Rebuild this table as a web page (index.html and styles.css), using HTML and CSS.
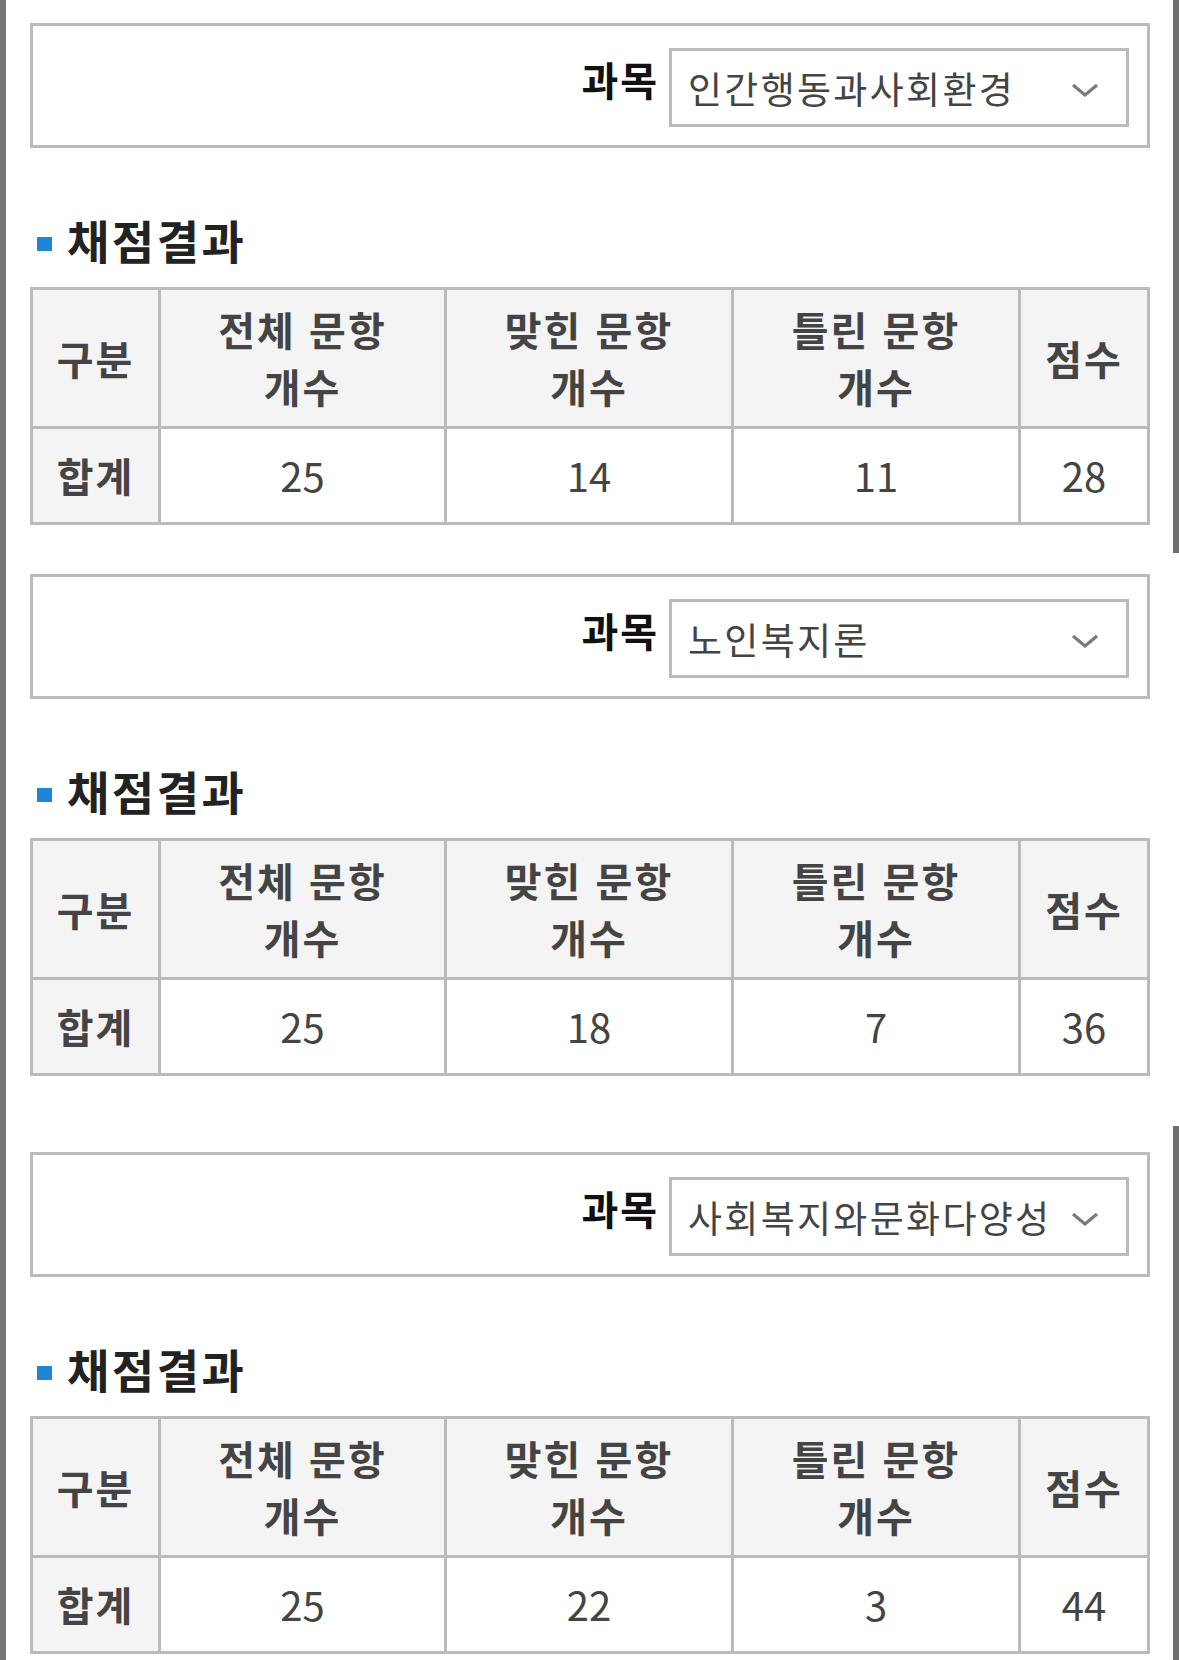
FILE: index.html
```html
<!DOCTYPE html>
<html lang="ko">
<head>
<meta charset="utf-8">
<title>채점결과</title>
<link rel="stylesheet" href="styles.css">
</head>
<body>
<div class="page">
  <section class="exam">
    <div class="subject-box">
      <span class="subject-label">과목</span>
      <div class="subject-select">
        <span class="subject-value">인간행동과사회환경</span>
        <svg class="chevron" viewBox="0 0 28 14" width="28" height="14"><polyline points="2,2 14,12 26,2" fill="none" stroke="#7a7a7a" stroke-width="3.2"/></svg>
      </div>
    </div>
    <h2 class="result-title"><span class="bullet"></span>채점결과</h2>
    <table class="result-table">
      <tr>
        <th class="c1">구분</th>
        <th class="c2">전체 문항<br>개수</th>
        <th class="c3">맞힌 문항<br>개수</th>
        <th class="c4">틀린 문항<br>개수</th>
        <th class="c5">점수</th>
      </tr>
      <tr>
        <td class="row-head">합계</td>
        <td>25</td>
        <td>14</td>
        <td>11</td>
        <td>28</td>
      </tr>
    </table>
  </section>

  <section class="exam">
    <div class="subject-box">
      <span class="subject-label">과목</span>
      <div class="subject-select">
        <span class="subject-value">노인복지론</span>
        <svg class="chevron" viewBox="0 0 28 14" width="28" height="14"><polyline points="2,2 14,12 26,2" fill="none" stroke="#7a7a7a" stroke-width="3.2"/></svg>
      </div>
    </div>
    <h2 class="result-title"><span class="bullet"></span>채점결과</h2>
    <table class="result-table">
      <tr>
        <th class="c1">구분</th>
        <th class="c2">전체 문항<br>개수</th>
        <th class="c3">맞힌 문항<br>개수</th>
        <th class="c4">틀린 문항<br>개수</th>
        <th class="c5">점수</th>
      </tr>
      <tr>
        <td class="row-head">합계</td>
        <td>25</td>
        <td>18</td>
        <td>7</td>
        <td>36</td>
      </tr>
    </table>
  </section>

  <section class="exam exam-spaced">
    <div class="subject-box">
      <span class="subject-label">과목</span>
      <div class="subject-select">
        <span class="subject-value">사회복지와문화다양성</span>
        <svg class="chevron" viewBox="0 0 28 14" width="28" height="14"><polyline points="2,2 14,12 26,2" fill="none" stroke="#7a7a7a" stroke-width="3.2"/></svg>
      </div>
    </div>
    <h2 class="result-title"><span class="bullet"></span>채점결과</h2>
    <table class="result-table">
      <tr>
        <th class="c1">구분</th>
        <th class="c2">전체 문항<br>개수</th>
        <th class="c3">맞힌 문항<br>개수</th>
        <th class="c4">틀린 문항<br>개수</th>
        <th class="c5">점수</th>
      </tr>
      <tr>
        <td class="row-head">합계</td>
        <td>25</td>
        <td>22</td>
        <td>3</td>
        <td>44</td>
      </tr>
    </table>
  </section>
</div>
<div class="scrollbar scrollbar-top"></div>
<div class="scrollbar scrollbar-bottom"></div>
</body>
</html>
```

FILE: styles.css
```css
html, body {
  margin: 0;
  padding: 0;
}
html {
  overflow: hidden;
}
body {
  position: relative;
  background: #fff;
  color: #444;
  font-family: "Noto Sans CJK KR", "Noto Sans", sans-serif;
  width: 1179px;
  height: 1660px;
}

.page {
  box-sizing: border-box;
  width: 1179px;
  height: 1660px;
  border-left: 6px solid #777;
  padding: 23px 29px 0 24px;
}

.exam + .exam {
  margin-top: 49px;
}
.exam.exam-spaced {
  margin-top: 76px;
}

.subject-box {
  box-sizing: border-box;
  height: 125px;
  border: 3px solid #bbb;
  display: flex;
  justify-content: flex-end;
  align-items: flex-start;
  padding: 22px 18px 0 0;
}
.subject-label {
  font-size: 40px;
  font-weight: 700;
  line-height: 40px;
  letter-spacing: 2px;
  color: #111;
  margin: 11px 10px 0 0;
}
.subject-select {
  box-sizing: border-box;
  width: 460px;
  height: 79px;
  border: 3px solid #bbb;
  display: flex;
  align-items: center;
  justify-content: space-between;
  padding: 0 27px 0 16px;
}
.subject-value {
  font-size: 37px;
  line-height: 40px;
  letter-spacing: 2.3px;
  color: #444;
  white-space: nowrap;
}
.chevron {
  display: block;
  flex: none;
  margin-top: 5px;
}

.result-title {
  display: flex;
  align-items: center;
  margin: 66px 0 22px;
  font-size: 46px;
  line-height: 51px;
  letter-spacing: 2.5px;
  font-weight: 700;
  color: #222;
}
.bullet {
  flex: none;
  width: 15px;
  height: 14px;
  background: #1e86d9;
  margin: 8px 15px 0 7px;
}

.result-table {
  width: 1120px;
  table-layout: fixed;
  border-collapse: separate;
  border-spacing: 0;
  border-top: 3px solid #bbb;
  border-left: 3px solid #bbb;
}
.result-table th,
.result-table td {
  box-sizing: border-box;
  padding: 0;
  border-right: 3px solid #bbb;
  border-bottom: 3px solid #bbb;
  text-align: center;
  vertical-align: middle;
  color: #444;
}
.result-table th {
  height: 139px;
  background: #f4f4f4;
  font-size: 40px;
  font-weight: 700;
  line-height: 57px;
  letter-spacing: 2px;
}
.result-table td {
  height: 96px;
  font-size: 40px;
  font-weight: 400;
  line-height: 93px;
}
.result-table td.row-head {
  background: #f4f4f4;
  font-size: 40px;
  font-weight: 700;
  letter-spacing: 2px;
}
.result-table .c1 { width: 128px; }
.result-table .c2 { width: 286px; }
.result-table .c3 { width: 287px; }
.result-table .c4 { width: 287px; }
.result-table .c5 { width: 129px; }

.scrollbar {
  position: absolute;
  right: 0;
  width: 6px;
  background: #6e6e6e;
}
.scrollbar-top {
  top: 0;
  height: 553px;
}
.scrollbar-bottom {
  top: 1126px;
  height: 534px;
}
```
